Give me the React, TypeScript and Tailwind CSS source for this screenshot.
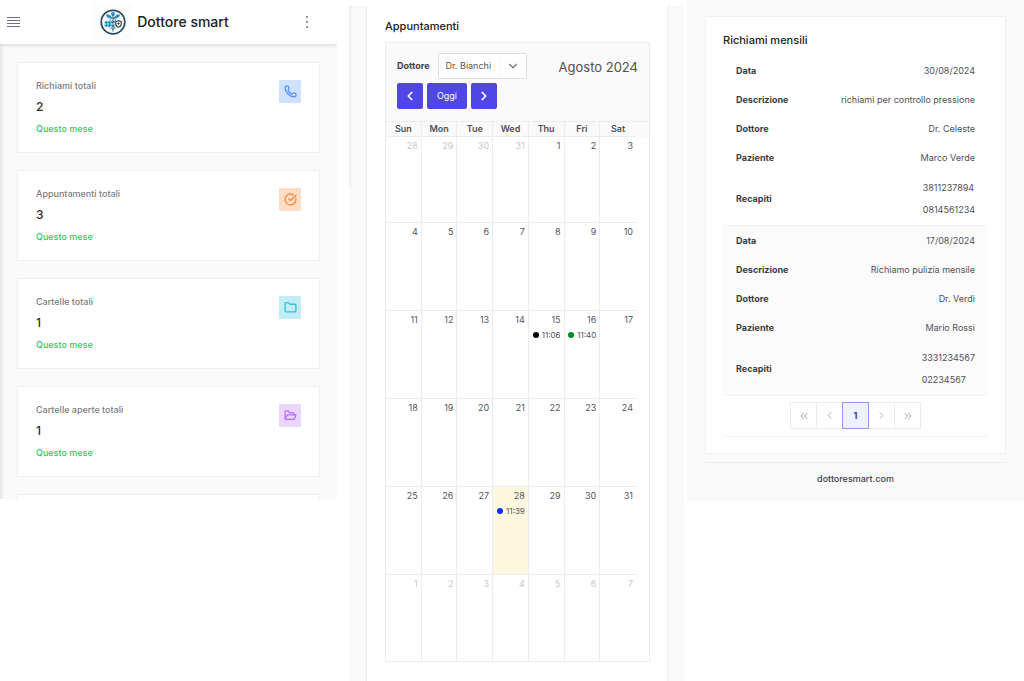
import { useState } from 'react';
import { ChevronDown, ChevronLeft, ChevronRight, ChevronsLeft, ChevronsRight, CircleCheckBig, Folder, Phone } from 'lucide-react';

const stats = [
  { label: 'Richiami totali', value: 2, box: 'bg-[#d0e1fd] text-[#5a92f8]', icon: <Phone size={13} strokeWidth={2.5} /> },
  { label: 'Appuntamenti totali', value: 3, box: 'bg-[#feddc7] text-[#fa8b3c]', icon: <CircleCheckBig size={13} strokeWidth={2.5} /> },
  { label: 'Cartelle totali', value: 1, box: 'bg-[#c3edf5] text-[#35c1dc]', icon: <Folder size={13} strokeWidth={2.5} /> },
  { label: 'Cartelle aperte totali', value: 1, box: 'bg-[#ead6fd] text-[#b56af8]', icon: <FolderOpenIcon /> },
];

const days = ['Sun', 'Mon', 'Tue', 'Wed', 'Thu', 'Fri', 'Sat'];

const weeks = [
  [28, 29, 30, 31, 1, 2, 3],
  [4, 5, 6, 7, 8, 9, 10],
  [11, 12, 13, 14, 15, 16, 17],
  [18, 19, 20, 21, 22, 23, 24],
  [25, 26, 27, 28, 29, 30, 31],
  [1, 2, 3, 4, 5, 6, 7],
];

const events: Record<number, { time: string; dot: string }> = {
  15: { time: '11:06', dot: 'bg-black' },
  16: { time: '11:40', dot: 'bg-[#008a1e]' },
  28: { time: '11:39', dot: 'bg-[#0a2cff]' },
};

const recalls = [
  {
    date: '30/08/2024',
    description: 'richiami per controllo pressione',
    doctor: 'Dr. Celeste',
    patient: 'Marco Verde',
    phones: ['3811237894', '0814561234'],
  },
  {
    date: '17/08/2024',
    description: 'Richiamo pulizia mensile',
    doctor: 'Dr. Verdi',
    patient: 'Mario Rossi',
    phones: ['3331234567', '02234567'],
  },
];

function FolderOpenIcon() {
  return (
    <svg width="13" height="13" viewBox="0 0 24 24" fill="none" stroke="currentColor" strokeWidth="2.2" strokeLinejoin="round" strokeLinecap="round">
      <path d="M2 18.500V5.500a2 2 0 0 1 2-2h3.500l3 3.500h6.500a2 2 0 0 1 2 2v2" />
      <path d="M2.500 18 6 11h16l-2.500 6.500a2 2 0 0 1-1.800 1.500H4a2 2 0 0 1-1.500-1" />
    </svg>
  );
}

function Logo() {
  return (
    <svg width="26" height="26" viewBox="0 0 52 52" fill="none">
      <circle cx="26" cy="26" r="23.500" fill="#fff" stroke="#2c4a5c" strokeWidth="3.500" />
      <path d="M24 17c-5-7-9-8-12-5 1 5 6 8 12 7zM28 17c5-7 9-8 12-5-1 5-6 8-12 7z" fill="#2a8fc4" />
      <circle cx="26" cy="10" r="4" fill="#2a8fc4" />
      <path d="M26 12v33" stroke="#2c4a5c" strokeWidth="1.800" />
      <path d="M26 18c-7 1-7 6 0 8s6 6 0 8-4 5 0 7" stroke="#2a8fc4" strokeWidth="2" />
      <path d="M26 18c7 1 7 6 0 8s-6 6 0 8 4 5 0 7" stroke="#2c4a5c" strokeWidth="1.800" />
      <path d="M9 27h13M9 33h13M12.500 23.500v13M18.500 23.500v13" stroke="#2196d3" strokeWidth="3" />
      <path d="M31.500 25.500l5.500-2 5.500 2v4c0 4-2 6-5.500 7-3.500-1-5.500-3-5.500-7z" fill="#fff" stroke="#2c4a5c" strokeWidth="2.500" />
      <path d="M37 26.500v5M34.500 29h5" stroke="#2c4a5c" strokeWidth="1.800" />
      <path d="M17 40h5M30 40h5" stroke="#9bb8c6" strokeWidth="1.500" />
    </svg>
  );
}

function Topbar() {
  return (
    <header className="relative flex h-11 items-center bg-white pl-1.5 pr-6 shadow-[0_1px_4px_rgba(0,0,0,0.16)]">
      <button type="button" aria-label="Menu" className="text-gray-500">
        <svg width="15" height="12" viewBox="0 0 15 12" stroke="currentColor" strokeWidth="1.200">
          <path d="M1 1.500h13M1 4.500h13M1 7.500h13M1 10.500h13" />
        </svg>
      </button>
      <div className="flex flex-1 items-center justify-center gap-1">
        <div className="flex h-9 w-10 items-center justify-center bg-[#fbfdfc]">
          <Logo />
        </div>
        <h1 className="text-sm font-medium text-[#212121]">Dottore smart</h1>
      </div>
      <button type="button" aria-label="Altro" className="flex h-5 w-3 flex-col items-center justify-center gap-[3px] text-gray-500">
        <span className="size-0.5 rounded-full bg-current" />
        <span className="size-0.5 rounded-full bg-current" />
        <span className="size-0.5 rounded-full bg-current" />
      </button>
    </header>
  );
}

function Dashboard() {
  return (
    <section className="self-start overflow-hidden bg-[#fafafa]">
      <Topbar />
      <div className="flex flex-col gap-[17px] px-[17px] pt-[18px] shadow-[inset_4px_0_4px_-3px_rgba(0,0,0,0.12)]">
        {stats.map((stat) => (
          <article key={stat.label} className="flex items-start justify-between border border-[#efeff2] bg-white px-[18px] pt-[17px] pb-4">
            <div className="flex flex-col gap-1.5 font-medium">
              <h2 className="text-[9px] leading-3 text-[#7b7b82]">{stat.label}</h2>
              <p className="text-xs leading-[18px] text-[#2d2d32]">{stat.value}</p>
              <p className="text-[9px] leading-[14px] text-[#2fc868]">Questo mese</p>
            </div>
            <div className={`flex h-[23px] w-[22px] items-center justify-center rounded-[1px] ${stat.box}`}>{stat.icon}</div>
          </article>
        ))}
        <div className="h-[5px] border border-b-0 border-[#efeff2] bg-white" />
      </div>
    </section>
  );
}

function Calendar() {
  const [doctor, setDoctor] = useState('Dr. Bianchi');
  const navButton = 'flex h-[26px] items-center justify-center rounded-[2px] bg-[#4f46e5] text-white';

  return (
    <section className="relative mt-[5px] ml-3 bg-[#fafafa] pr-4 pl-[17px]">
      <span className="absolute top-0 left-0 h-[182px] w-1 bg-linear-to-r from-[#ececec] to-[#fafafa]" />
      <div className="h-full border-x border-[#efeff0] bg-white pt-3 pr-[17px] pl-[18px]">
        <h2 className="text-[11px] leading-[18px] font-medium text-[#212121]">Appuntamenti</h2>
        <div className="mt-[7px] border border-[#ececee]">
          <div className="flex items-start justify-between bg-[#fafafa] px-[11px] pt-2.5 pb-3">
            <div>
              <div className="flex items-center gap-2">
                <label htmlFor="doctor" className="text-[9px] font-bold text-[#404045]">Dottore</label>
                <div className="relative">
                  <select
                    id="doctor"
                    value={doctor}
                    onChange={(e) => setDoctor(e.target.value)}
                    className="block h-[26px] w-[89px] appearance-none rounded-[2px] border border-[#dedee2] bg-white pl-[7px] text-[9px] text-[#55555b]"
                  >
                    <option>Dr. Bianchi</option>
                    <option>Dr. Celeste</option>
                    <option>Dr. Verdi</option>
                  </select>
                  <ChevronDown size={14} strokeWidth={2} className="pointer-events-none absolute top-1.5 right-[7px] text-[#75757c]" />
                  <span className="pointer-events-none absolute top-px right-[26px] h-6 w-px bg-[#f6f6f7]" />
                </div>
              </div>
              <div className="mt-1 flex gap-1">
                <button type="button" aria-label="Precedente" className={`${navButton} w-[26px]`}>
                  <ChevronLeft size={14} strokeWidth={3} />
                </button>
                <button type="button" className={`${navButton} w-10 text-[9px]`}>Oggi</button>
                <button type="button" aria-label="Successivo" className={`${navButton} w-[26px]`}>
                  <ChevronRight size={14} strokeWidth={3} />
                </button>
              </div>
            </div>
            <p className="pt-0.5 text-[13px] leading-6 whitespace-nowrap text-[#505055]">Agosto 2024</p>
          </div>
          <table className="w-full table-fixed border-separate border-spacing-0">
            <colgroup>
              {days.map((day) => <col key={day} />)}
              <col className="w-[13px]" />
            </colgroup>
            <thead>
              <tr className="h-4 bg-[#fafafa] text-[9px] leading-3 text-[#505055]">
                {days.map((day, i) => (
                  <th key={day} className={`border-y border-[#ececee] p-0 font-semibold ${i < 6 ? 'border-r' : ''}`}>{day}</th>
                ))}
                <td className="border-t border-[#ececee] p-0" />
              </tr>
            </thead>
            <tbody>
              {weeks.map((week, w) => (
                <tr key={w} className={w === 0 || w === 5 ? 'h-[86px]' : 'h-[88px]'}>
                  {week.map((day, d) => {
                    const outside = (w === 0 && day > 7) || w === 5;
                    const event = outside ? undefined : events[day];
                    return (
                      <td
                        key={d}
                        className={`border-[#ececee] p-0 align-top ${d < 6 ? 'border-r' : ''} ${w < 5 ? 'border-b' : ''} ${w === 4 && d === 3 ? 'bg-[#fff8e0]' : ''}`}
                      >
                        <div className={`pt-0.5 pr-[3px] text-right text-[9px] leading-[14px] ${outside ? 'text-[#c9c9cc]' : 'text-[#55555b]'}`}>{day}</div>
                        {event && (
                          <div className="flex items-center justify-end gap-[3px] pt-0.5 pr-[3px] text-[8px] leading-3 text-[#55555b]">
                            <span className={`size-1.5 shrink-0 rounded-full ${event.dot}`} />
                            {event.time}
                          </div>
                        )}
                      </td>
                    );
                  })}
                </tr>
              ))}
            </tbody>
          </table>
        </div>
      </div>
    </section>
  );
}

function RecallRows({ recall, striped }: { recall: (typeof recalls)[number]; striped: boolean }) {
  const fields = [
    ['Data', recall.date],
    ['Descrizione', recall.description],
    ['Dottore', recall.doctor],
    ['Paziente', recall.patient],
  ];

  return (
    <tbody className={striped ? 'bg-[#fbfbfb]' : ''}>
      {fields.map(([label, value]) => (
        <tr key={label} className="h-[29px]">
          <th className="py-0 pr-0 pl-[13px] text-left font-bold text-[#3b3b40]">{label}</th>
          <td className="py-0 pr-[13px] pl-0 text-right">{value}</td>
        </tr>
      ))}
      <tr className="h-[54px]">
        <th className="border-b border-[#f4f4f5] py-0 pr-0 pl-[13px] text-left font-bold text-[#3b3b40]">Recapiti</th>
        <td className="border-b border-[#f4f4f5] py-0 pr-[13px] pl-0">
          <div className="ml-auto w-fit">
            {recall.phones.map((phone) => <p key={phone} className="leading-[22px]">{phone}</p>)}
          </div>
        </td>
      </tr>
    </tbody>
  );
}

function Recalls() {
  const pageButton = 'flex h-[27px] w-[27px] items-center justify-center border border-[#ececee] text-[#a2a2a8]';

  return (
    <section className="ml-[3px] self-start bg-[#fafafa] px-[18px] pt-4">
      <div className="border border-[#f0f0f1] bg-white px-[17px] pt-3.5 pb-4">
        <h2 className="text-[11px] leading-[18px] font-medium text-[#212121]">Richiami mensili</h2>
        <table className="mt-[7px] w-full border-separate border-spacing-0 text-[9px] text-[#505055]">
          {recalls.map((recall, i) => <RecallRows key={recall.date} recall={recall} striped={i % 2 === 1} />)}
        </table>
        <nav aria-label="Pagine" className="flex justify-center border-b border-[#f4f4f5] pt-1.5 pb-[7px]">
          <button type="button" aria-label="Prima pagina" className={pageButton}><ChevronsLeft size={12} /></button>
          <button type="button" aria-label="Pagina precedente" className={`${pageButton} -ml-px`}><ChevronLeft size={11} /></button>
          <button type="button" aria-current="page" className="z-10 -ml-px flex h-[27px] w-[27px] items-center justify-center border border-[#9a93f2] bg-[#eef2ff] text-[9px] font-bold text-[#4338a0]">1</button>
          <button type="button" aria-label="Pagina successiva" className={`${pageButton} -ml-px`}><ChevronRight size={11} /></button>
          <button type="button" aria-label="Ultima pagina" className={`${pageButton} -ml-px`}><ChevronsRight size={12} /></button>
        </nav>
      </div>
      <footer className="mt-2 border-t border-[#ececee] pt-2.5 pb-4 text-center text-[9px] leading-3 font-medium text-[#404045]">
        dottoresmart.com
      </footer>
    </section>
  );
}

export default function App() {
  return (
    <main className="grid min-h-screen grid-cols-[337fr_347fr_340fr] bg-white font-['Inter',sans-serif]">
      <Dashboard />
      <Calendar />
      <Recalls />
    </main>
  );
}
